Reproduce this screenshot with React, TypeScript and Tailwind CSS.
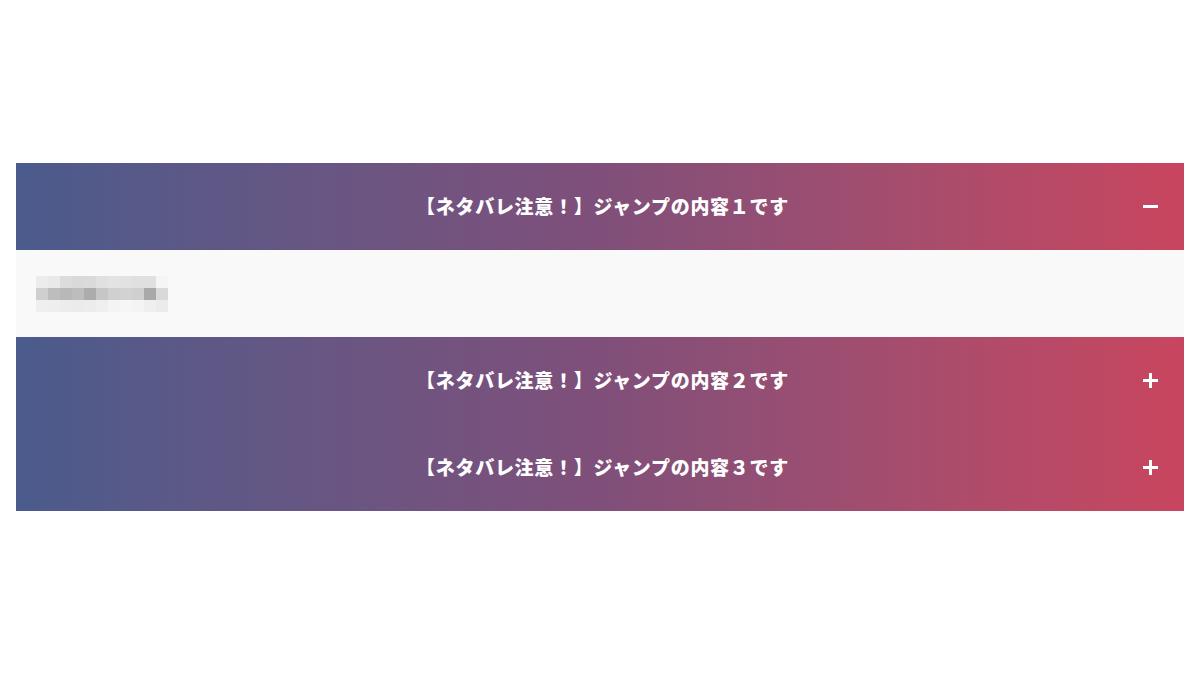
import React, { useState } from "react";

const items = [
  "【ネタバレ注意！】ジャンプの内容１です",
  "【ネタバレ注意！】ジャンプの内容２です",
  "【ネタバレ注意！】ジャンプの内容３です",
];

// pixelated placeholder for hidden spoiler text
const mosaic: string[][] = [
  ["#ececec", "#e9e9e9", "#dcdcdc", "#d9d9d9", "#dadada", "#e0e0e0", "#e3e3e3", "#e2e2e2", "#e0e0e0", "#e0e0e0", "#f5f5f5"],
  ["#cfcfcf", "#bdbdbd", "#b8b8b8", "#bdbdbd", "#acacac", "#c6c6c6", "#d0d0d0", "#d2d2d2", "#cfcfcf", "#a9a9a9", "#d9d9d9"],
  ["#efefef", "#eeeeee", "#ececec", "#ebebeb", "#ececec", "#efefef", "#f4f4f4", "#f6f6f6", "#f4f4f4", "#efefef", "#ebebeb"],
];

function Mosaic() {
  return (
    <svg width={132} height={36} viewBox="0 0 132 36">
      {mosaic.map((row, r) =>
        row.map((c, i) => <rect key={`${r}-${i}`} x={i * 12} y={r * 12} width={12} height={12} fill={c} />)
      )}
    </svg>
  );
}

function Toggle({ open }: { open: boolean }) {
  return (
    <svg width={15} height={15} viewBox="0 0 15 15" className="shrink-0">
      <rect x={0} y={6} width={15} height={3} fill="#fff" />
      {!open && <rect x={6} y={0} width={3} height={15} fill="#fff" />}
    </svg>
  );
}

export default function App() {
  const [open, setOpen] = useState(0);
  return (
    <div
      className="w-[1200px] h-[675px] bg-white pt-[163px] px-[16px]"
      style={{ fontFamily: '"Noto Sans CJK JP", "Noto Sans", sans-serif' }}
    >
      <div className="flex flex-col bg-gradient-to-r from-[#4a5b8c] via-[#7f4f7a] to-[#c9455f]">
        {items.map((t, i) => (
          <div key={i} className="flex flex-col">
            <button
              onClick={() => setOpen(open === i ? -1 : i)}
              className="h-[87px] flex items-center pl-[46px] pr-[26px] text-white"
            >
              <span className="flex-1 text-center text-[19px] font-black tracking-[0.7px]">{t}</span>
              <Toggle open={open === i} />
            </button>
            {open === i && (
              <div className="h-[87px] bg-[#f9f9f9] flex items-center pl-[20px]">
                <Mosaic />
              </div>
            )}
          </div>
        ))}
      </div>
    </div>
  );
}
